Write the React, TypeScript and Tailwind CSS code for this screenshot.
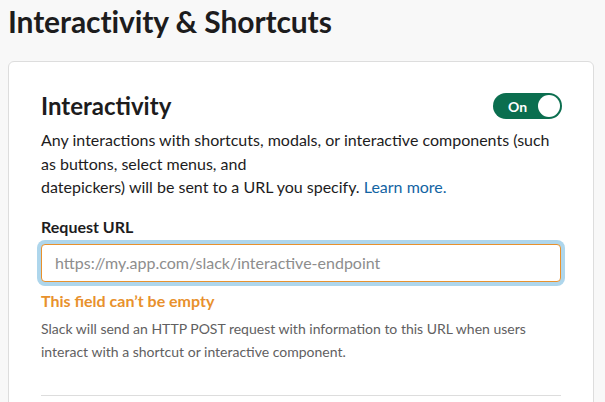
export default function App() {
  return (
    <div
      className="min-h-screen bg-[#f8f8f8] px-2 text-[#1d1c1d]"
      style={{ fontFamily: 'Lato, "Noto Sans", sans-serif' }}
    >
      <h1 className="pt-[1px] text-[30px] font-bold leading-[40px] tracking-[-0.1px]">
        Interactivity &amp; Shortcuts
      </h1>
      <div className="mt-[20px] w-[586px] rounded-[6px] border border-[#dddddd] bg-white px-8 pt-[28px]">
        <div className="flex items-center justify-between">
          <h2 className="text-[24px] font-bold leading-[32px]">Interactivity</h2>
          <button className="mr-[-1px] flex h-[26px] w-[69px] items-center justify-between rounded-full bg-[#0b6e4f] pl-[15px] pr-[2px]">
            <span className="text-[14px] font-bold text-white">On</span>
            <span className="h-[22px] w-[22px] rounded-full bg-white" />
          </button>
        </div>
        <p className="mt-[6px] text-[16px] leading-[23.5px]">
          Any interactions with shortcuts, modals, or interactive components (such as buttons, select menus, and
          <br />
          datepickers) will be sent to a URL you specify.{' '}
          <a className="text-[#1264a3]">Learn more.</a>
        </p>
        <label className="mt-[17px] block text-[16px] font-bold leading-[22px]">Request URL</label>
        <div className="-mx-[4px] mt-[2px] rounded-[8px] bg-[#aed6ec] p-[4px]">
          <input
            className="h-[38px] w-full rounded-[4px] border border-[#e8912d] bg-white px-[13px] text-[16px] outline-none placeholder:text-[#8d8d8d]"
            placeholder="https://my.app.com/slack/interactive-endpoint"
          />
        </div>
        <div className="mt-[3px] text-[16px] font-bold leading-[24px] text-[#e8912d]">
          This field can’t be empty
        </div>
        <p className="mt-[4px] text-[14px] leading-[23px] text-[#616061]">
          Slack will send an HTTP POST request with information to this URL when users interact with a shortcut or interactive component.
        </p>
        <div className="mt-[32px] border-t border-[#dddddd] pb-8" />
      </div>
    </div>
  )
}
